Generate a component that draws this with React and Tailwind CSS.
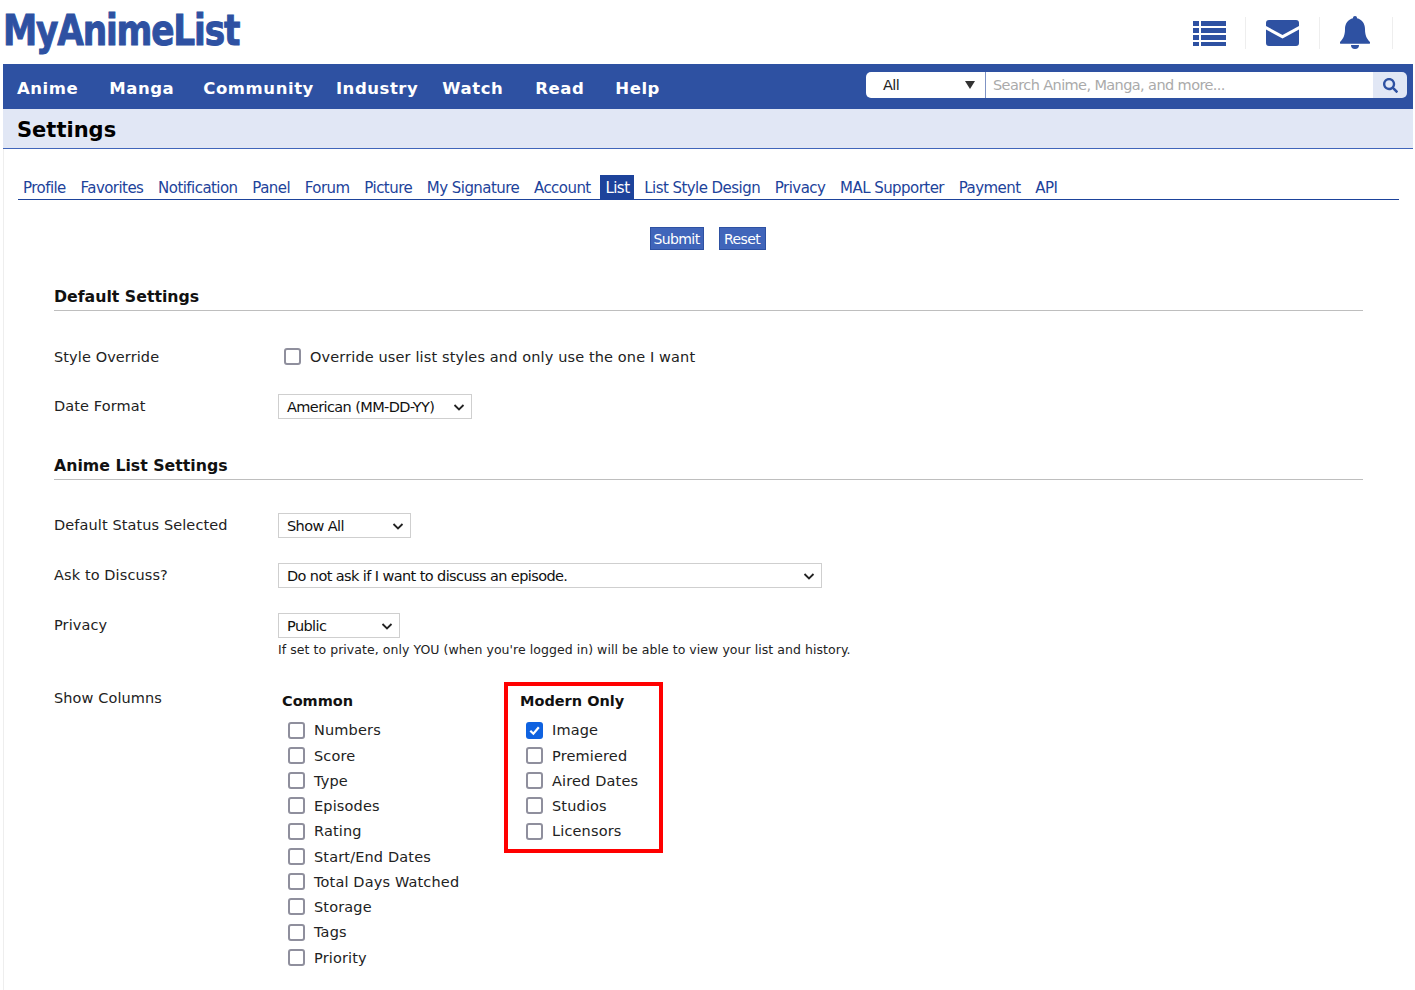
import React from 'react';
import { FaSearch } from 'react-icons/fa';

const verdana = 'font-["DejaVu_Sans",sans-serif]';
const tahoma = 'font-["DejaVu_Sans",sans-serif] tracking-[-0.6px]';

const navItems = [
  ['Anime', 'mr-[31px]'],
  ['Manga', 'mr-[29px]'],
  ['Community', 'mr-[22px]'],
  ['Industry', 'mr-[24px]'],
  ['Watch', 'mr-[32px]'],
  ['Read', 'mr-[31px]'],
  ['Help', ''],
];

const tabs = ['Profile', 'Favorites', 'Notification', 'Panel', 'Forum', 'Picture', 'My Signature', 'Account', 'List', 'List Style Design', 'Privacy', 'MAL Supporter', 'Payment', 'API'];

const common = ['Numbers', 'Score', 'Type', 'Episodes', 'Rating', 'Start/End Dates', 'Total Days Watched', 'Storage', 'Tags', 'Priority'];
const modern = ['Image', 'Premiered', 'Aired Dates', 'Studios', 'Licensors'];

const Checkbox = ({ checked }) => (
  checked ? (
    <span className="-mt-[2px] flex h-[17px] w-[17px] shrink-0 items-center justify-center rounded-[3px] bg-[#0f62e0]">
      <svg viewBox="0 0 16 16" className="h-[15px] w-[15px]" fill="none" stroke="#fff" strokeWidth="2.4">
        <path d="M3.500 8.200 6.800 11.400 12.600 4.600" />
      </svg>
    </span>
  ) : (
    <span className="-mt-[2px] block h-[17px] w-[17px] shrink-0 rounded-[3px] border-2 border-[#8f8f9d] bg-white" />
  )
);

const Select = ({ label, className }) => (
  <div className={`flex h-[25px] items-center justify-between border border-[#cfcfcf] bg-white pl-2 pr-[6px] text-[14.500px] text-[#111] ${tahoma} ${className}`}>
    <span className="pt-[2px]">{label}</span>
    <svg viewBox="0 0 12 12" className="h-3 w-3" fill="none" stroke="#222" strokeWidth="1.8">
      <path d="M1.500 4 6 8.500 10.500 4" />
    </svg>
  </div>
);

const SectionTitle = ({ children, className }) => (
  <div className={`border-b border-[#bebebe] pb-[1px] text-[15.750px] leading-[24px] font-bold text-[#111] ${verdana} ${className}`}>
    {children}
  </div>
);

const Row = ({ label, className, children }) => (
  <div className={`flex ${className}`}>
    <div className={`w-[224px] shrink-0 text-[14.500px] leading-[25px] tracking-[0.1px] text-[#222] ${verdana}`}>{label}</div>
    <div>{children}</div>
  </div>
);

const CheckColumn = ({ title, items, checkedItem }) => (
  <>
    <div className={`text-[14.500px] leading-[20px] font-bold text-[#111] ${verdana}`}>{title}</div>
    <div className="mt-[7.600px] flex flex-col">
      {items.map((item) => (
        <div key={item} className="flex h-[25.250px] items-center pl-[6px]">
          <Checkbox checked={item === checkedItem} />
          <span className={`ml-[9px] text-[14.500px] tracking-[0.15px] text-[#222] ${verdana}`}>{item}</span>
        </div>
      ))}
    </div>
  </>
);

const App = () => {
  return (
    <div className="h-[990px] w-[1415px] overflow-hidden bg-white">
      {/* top bar */}
      <header className="flex h-[64px] items-start justify-between pl-[3px] pr-[22px]">
        <div className={`mt-[5px] origin-left scale-x-[0.8] text-[43px] leading-[50px] font-bold tracking-[-1.500px] text-[#2e51a2] [-webkit-text-stroke:1px_#2e51a2] ${verdana}`}>
          MyAnimeList
        </div>
        <div className="mt-[16px] flex items-center">
          <svg viewBox="0 0 33 26" className="h-[26px] w-[33px]" fill="#2e51a2">
            <path d="M0 1h6v5H0zM8 1h25v5H8zM0 8h6v5H0zM8 8h25v5H8zM0 15h6v5H0zM8 15h25v5H8zM0 22h6v4H0zM8 22h25v4H8z" />
          </svg>
          <div className="ml-[19px] h-[32px] w-px bg-[#eee]" />
          <svg viewBox="0 0 33 26" className="ml-[20px] h-[26px] w-[33px]" fill="#2e51a2">
            <path d="M3 0h27a3 3 0 0 1 3 3v3L16.500 15 0 6V3a3 3 0 0 1 3-3z" />
            <path d="M0 9.500 16.500 18.500 33 9.500V23a3 3 0 0 1-3 3H3a3 3 0 0 1-3-3z" />
          </svg>
          <div className="ml-[20px] h-[32px] w-px bg-[#eee]" />
          <svg viewBox="0 0 30 33" className="ml-[20px] h-[33px] w-[30px]" fill="#2e51a2">
            <path d="M15 0a2 2 0 0 1 2 2.200C22 3.300 25 7.500 25 13c0 6 1.500 9.500 5 13 .4.800 0 1.800-1 1.800H1c-1 0-1.400-1-1-1.800 3.500-3.500 5-7 5-13 0-5.500 3-9.700 8-10.800A2 2 0 0 1 15 0z" />
            <path d="M11 29h8a4 4 0 0 1-8 0z" />
          </svg>
          <div className="ml-[22px] h-[32px] w-px bg-[#eee]" />
        </div>
      </header>

      {/* nav */}
      <nav className="ml-[3px] flex h-[45px] w-[1410px] items-center bg-[#2e51a2] pl-[14px] pr-[6px]">
        <div className={`mt-[5px] flex text-[16.500px] font-bold tracking-[0.55px] text-white ${verdana}`}>
          {navItems.map(([name, gap]) => (
            <span key={name} className={gap}>{name}</span>
          ))}
        </div>
        <div className={`ml-auto mb-[3px] flex h-[26px] text-[14.500px] ${tahoma}`}>
          <div className="flex w-[120px] items-center justify-between rounded-l-[5px] border-r border-[#7f93c4] bg-white pl-[17px] pr-[10px] text-[#222]">
            <span className="pt-[2px]">All</span>
            <span className="h-0 w-0 border-x-[5px] border-t-[8px] border-x-transparent border-t-[#333]" />
          </div>
          <div className="flex w-[387px] items-center bg-white pl-[7px] pt-[2px] text-[#aaa]">Search Anime, Manga, and more...</div>
          <div className="flex w-[34px] items-center justify-center rounded-r-[5px] bg-[#e1e7f5]">
            <FaSearch size={15} color="#2e51a2" />
          </div>
        </div>
      </nav>

      <div className="ml-[3px] h-[881px] w-[1410px] border-l border-[#eee]">
        {/* title */}
        <div className={`-ml-px flex h-[40px] items-center border-b border-[#4065ba] bg-[#e1e7f5] pl-[14px] pt-[5px] text-[21px] font-bold text-black ${verdana}`}>
          Settings
        </div>

        {/* tabs */}
        <div className={`ml-[14px] mr-[14px] mt-[26px] flex h-[25px] items-stretch gap-[4.750px] border-b border-[#1d439b] text-[15px] tracking-[-0.55px] ${verdana}`}>
          {tabs.map((tab) => (
            <span
              key={tab}
              className={tab === 'List' ? 'flex items-center bg-[#1d439b] px-[5px] pt-[3px] text-white' : 'flex items-center px-[5px] pt-[3px] text-[#1d439b]'}
            >
              {tab}
            </span>
          ))}
        </div>

        {/* buttons */}
        <div className={`mt-[27px] flex justify-center gap-[15px] pr-[2px] text-[14px] text-white ${tahoma}`}>
          <span className="flex h-[23px] w-[54px] items-center justify-center border border-[#2e51a2] bg-[#4065ba] pt-[2px]">Submit</span>
          <span className="flex h-[23px] w-[47px] items-center justify-center border border-[#2e51a2] bg-[#4065ba] pt-[2px]">Reset</span>
        </div>

        <div className="ml-[50px] mr-[50px]">
          <SectionTitle className="mt-[35px]">Default Settings</SectionTitle>

          <Row label="Style Override" className="mt-[34px]">
            <div className="flex h-[25px] items-center pl-[6px]">
              <Checkbox />
              <span className={`ml-[9px] text-[14.500px] tracking-[0.13px] text-[#222] ${verdana}`}>Override user list styles and only use the one I want</span>
            </div>
          </Row>
          <Row label="Date Format" className="mt-[24px]">
            <Select label="American (MM-DD-YY)" className="w-[194px]" />
          </Row>

          <SectionTitle className="mt-[35px]">Anime List Settings</SectionTitle>

          <Row label="Default Status Selected" className="mt-[33px]">
            <Select label="Show All" className="w-[133px]" />
          </Row>
          <Row label="Ask to Discuss?" className="mt-[25px]">
            <Select label="Do not ask if I want to discuss an episode." className="w-[544px]" />
          </Row>
          <Row label="Privacy" className="mt-[25px]">
            <Select label="Public" className="w-[122px]" />
            <p className={`mt-[3px] text-[12.500px] leading-[18px] tracking-[0.05px] text-[#222] ${verdana}`}>
              If set to private, only YOU (when you're logged in) will be able to view your list and history.
            </p>
          </Row>

          <Row label="Show Columns" className="mt-[27px]">
            <div className="-mt-[4px] flex items-start">
              <div className="w-[226px] pl-[4px] pt-[9px]">
                <CheckColumn title="Common" items={common} />
              </div>
              <div className="w-[159px] border-[4px] border-[#ff0000] pb-[4.400px] pl-[12px] pt-[5px]">
                <CheckColumn title="Modern Only" items={modern} checkedItem="Image" />
              </div>
            </div>
          </Row>
        </div>
      </div>
    </div>
  );
};

export default App;
